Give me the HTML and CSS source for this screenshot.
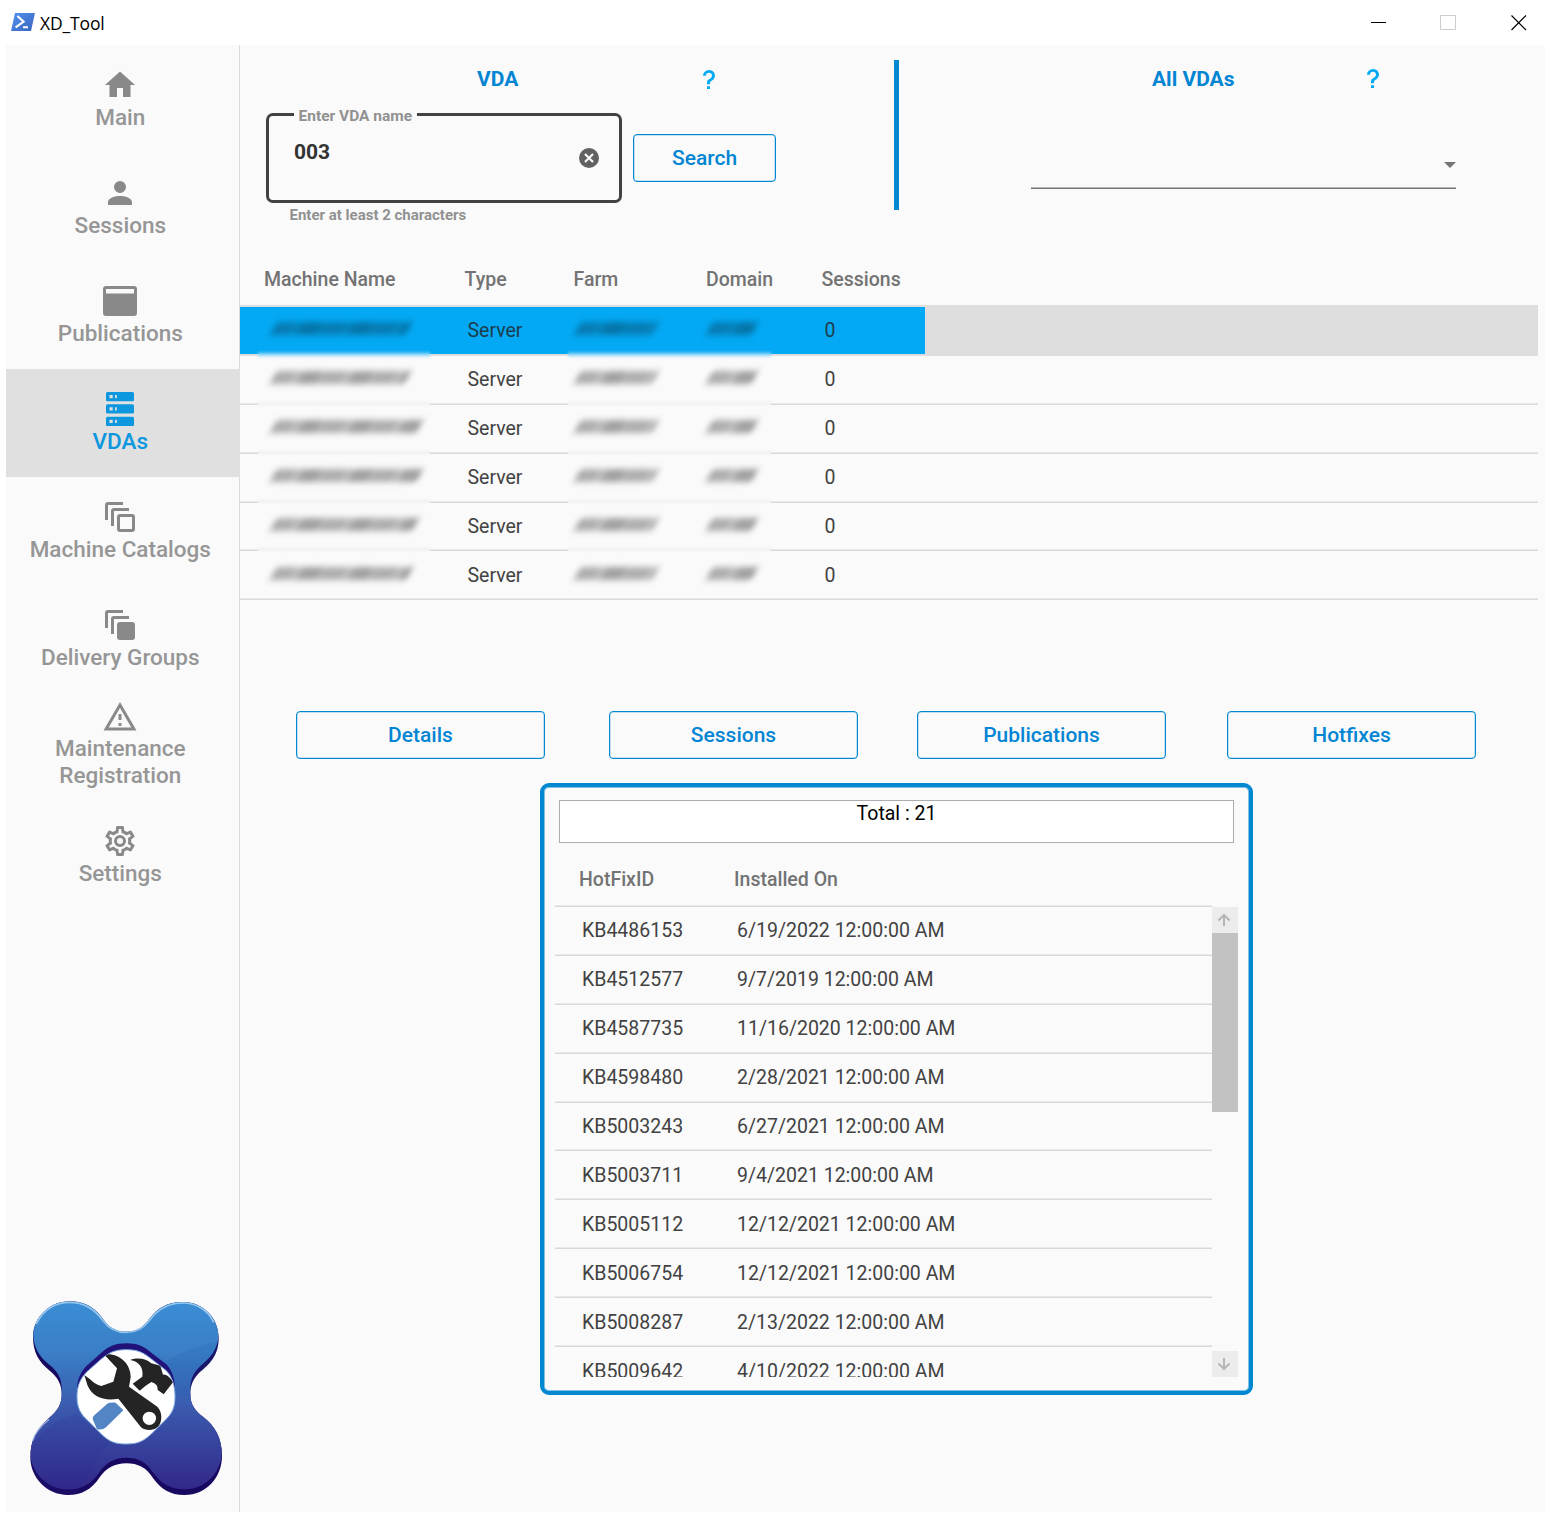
FILE: index.html
```html
<!DOCTYPE html>
<html lang="en">
<head>
<meta charset="utf-8">
<title>XD_Tool</title>
<link rel="stylesheet" href="styles.css">
</head>
<body>
<header class="titlebar">
  <svg class="app-icon" viewBox="0 0 24 18"><defs><linearGradient id="ps" x1="0" y1="0" x2="1" y2="1"><stop offset="0" stop-color="#5391f0"/><stop offset="1" stop-color="#3766bd"/></linearGradient></defs><path d="M4 0H24L20 18H0Z" fill="url(#ps)"/><path d="M6.4 3L12.6 8.6L4.6 14.4M12 14.2H17" fill="none" stroke="#fff" stroke-width="2.1"/></svg>
  <span class="app-title">XD_Tool</span>
  <div class="window-buttons">
    <svg viewBox="0 0 16 16"><path d="M0 7.5H15" stroke="#000"/></svg>
    <svg viewBox="0 0 16 16"><path d="M-.5 .5H14.5V14.5H-.5Z" fill="none" stroke="#ccc"/></svg>
    <svg viewBox="0 0 16 16"><path d="M.5 .5L15 15M15 .5L.5 15" stroke="#000" stroke-width="1.2"/></svg>
  </div>
</header>
<div class="window">
  <nav class="sidebar">
    <a class="nav-item"><svg viewBox="0 0 24 24"><path d="M10,20V14H14V20H19V12H22L12,3L2,12H5V20H10Z"/></svg><span>Main</span></a>
    <a class="nav-item"><svg viewBox="0 0 24 24"><path d="M12,4A4,4 0 0,1 16,8A4,4 0 0,1 12,12A4,4 0 0,1 8,8A4,4 0 0,1 12,4M12,14C16.42,14 20,15.79 20,18V20H4V18C4,15.79 7.58,14 12,14Z"/></svg><span>Sessions</span></a>
    <a class="nav-item"><svg viewBox="0 0 36 36"><path fill-rule="evenodd" d="M4 3H32Q35 3 35 6V30Q35 33 32 33H4Q1 33 1 30V6Q1 3 4 3ZM4 6V10.5H32V6Z"/></svg><span>Publications</span></a>
    <a class="nav-item selected"><svg viewBox="0 0 36 36"><path fill-rule="evenodd" d="M5.500 1H30.500Q32 1 32 2.500V9Q32 10.300 30.500 10.300H5.500Q4 10.300 4 9V2.500Q4 1 5.500 1ZM7.500 4V7.300H10.700V4ZM13 4V7.300H14.800V4ZM5.500 13.300H30.500Q32 13.300 32 14.800V21.300Q32 22.600 30.500 22.600H5.500Q4 22.600 4 21.300V14.800Q4 13.300 5.500 13.300ZM7.500 16.300V19.600H10.700V16.300ZM13 16.300V19.600H14.800V16.300ZM5.500 25.700H30.500Q32 25.700 32 27.200V33.700Q32 35 30.500 35H5.500Q4 35 4 33.700V27.200Q4 25.700 5.500 25.700ZM7.500 28.700V32H10.700V28.700ZM13 28.700V32H14.800V28.700Z"/></svg><span>VDAs</span></a>
    <a class="nav-item"><svg viewBox="0 0 36 36"><path class="line" d="M4.500 21V6Q4.500 4.500 6 4.500H21M10.500 27V12Q10.500 10.500 12 10.500H27"/><rect class="line" x="16.500" y="16.500" width="15" height="15" rx="1.500"/></svg><span>Machine Catalogs</span></a>
    <a class="nav-item"><svg viewBox="0 0 36 36"><path class="line" d="M4.500 21V6Q4.500 4.500 6 4.500H21M10.500 27V12Q10.500 10.500 12 10.500H27"/><rect x="15" y="15" width="18" height="18" rx="3"/></svg><span>Delivery Groups</span></a>
    <a class="nav-item two-line"><svg viewBox="0 0 24 24"><path d="M12,2L1,21H23M12,6L19.53,19H4.47M11,10V14H13V10M11,16V18H13V16"/></svg><span>Maintenance<br>Registration</span></a>
    <a class="nav-item"><svg viewBox="0 0 24 24"><path d="M12,8A4,4 0 0,1 16,12A4,4 0 0,1 12,16A4,4 0 0,1 8,12A4,4 0 0,1 12,8M12,10A2,2 0 0,0 10,12A2,2 0 0,0 12,14A2,2 0 0,0 14,12A2,2 0 0,0 12,10M10,22C9.75,22 9.54,21.82 9.5,21.58L9.13,18.93C8.5,18.68 7.96,18.34 7.44,17.94L4.95,18.95C4.73,19.03 4.46,18.95 4.34,18.73L2.34,15.27C2.21,15.05 2.27,14.78 2.46,14.63L4.57,12.97L4.5,12L4.57,11L2.46,9.37C2.27,9.22 2.21,8.95 2.34,8.73L4.34,5.27C4.46,5.05 4.73,4.96 4.95,5.05L7.44,6.05C7.96,5.66 8.5,5.32 9.13,5.07L9.5,2.42C9.54,2.18 9.75,2 10,2H14C14.25,2 14.46,2.18 14.5,2.42L14.87,5.07C15.5,5.32 16.04,5.66 16.56,6.05L19.05,5.05C19.27,4.96 19.54,5.05 19.66,5.27L21.66,8.73C21.79,8.95 21.73,9.22 21.54,9.37L19.43,11L19.5,12L19.43,13L21.54,14.63C21.73,14.78 21.79,15.05 21.66,15.27L19.66,18.73C19.54,18.95 19.27,19.04 19.05,18.95L16.56,17.95C16.04,18.34 15.5,18.68 14.87,18.93L14.5,21.58C14.46,21.82 14.25,22 14,22H10M11.25,4L10.88,6.61C9.68,6.86 8.62,7.5 7.85,8.39L5.44,7.35L4.69,8.65L6.8,10.2C6.4,11.37 6.4,12.64 6.8,13.8L4.68,15.36L5.43,16.66L7.86,15.62C8.63,16.5 9.68,17.14 10.87,17.38L11.24,20H12.76L13.13,17.39C14.32,17.14 15.37,16.5 16.14,15.62L18.57,16.66L19.32,15.36L17.2,13.81C17.6,12.64 17.6,11.37 17.2,10.2L19.31,8.65L18.56,7.35L16.15,8.39C15.38,7.5 14.32,6.86 13.12,6.62L12.75,4H11.25Z"/></svg><span>Settings</span></a>
    <svg class="logo" viewBox="55 55 590 595">
      <defs>
        <linearGradient id="face" x1="0" y1="0" x2="0" y2="1"><stop offset="0" stop-color="#3a8fd6"/><stop offset=".3" stop-color="#3a7ec6"/><stop offset=".6" stop-color="#3a57ac"/><stop offset="1" stop-color="#32288a"/></linearGradient>
        <path id="body" d="M70,170C70,110 120,62 180,62C225,62 258,82 282,118C300,142 320,153 350,153C385,153 402,138 418,116C445,80 475,64 520,64C580,64 627,112 627,172C627,225 600,250 570,275C550,295 542,315 542,340C542,370 555,390 580,408C615,435 637,470 637,525C637,590 590,643 525,643C480,643 455,625 432,595C410,560 385,548 350,548C315,548 290,562 270,590C245,628 215,643 175,643C110,643 62,590 62,530C62,480 80,445 118,412C145,390 156,370 156,340C156,312 145,290 120,270C88,245 70,215 70,170Z"/>
        <path id="hole" d="M350,207C385,207 400,215 425,235L470,270C488,290 496,315 496,348C496,385 485,400 465,420L425,460C400,482 385,490 350,490C315,490 300,482 280,465L235,420C212,400 202,380 202,348C202,315 212,295 230,275L275,235C300,215 315,207 350,207Z"/>
        <clipPath id="bodyClip"><use href="#body"/></clipPath>
        <clipPath id="holeClip"><use href="#hole"/></clipPath>
      </defs>
      <use href="#body" fill="#19085f"/>
      <g clip-path="url(#bodyClip)">
        <use href="#body" y="-17" fill="url(#face)"/>
        <path d="M380,330Q450,215 640,180V420Q600,330 380,330Z" fill="#1e5fae" opacity=".16"/>
        <path d="M60,510Q110,420 200,400L300,480L200,640H50Z" fill="#2b2b8c" opacity=".14"/>
      </g>
      <path d="M80,130C100,85 140,65 180,65C225,65 255,85 280,120C298,144 320,155 350,155C385,155 404,140 420,118C447,82 477,67 520,67C560,67 595,88 612,125" fill="none" stroke="#b6dcf5" stroke-width="5" opacity=".75"/>
      <path d="M69,480Q78,447 118,416" fill="none" stroke="#b6c8ef" stroke-width="5" opacity=".7"/>
      <use href="#hole" y="-19" fill="#21127a"/>
      <use href="#hole" fill="#fff" stroke="#83aee0" stroke-width="3"/>
      <g clip-path="url(#holeClip)">
        <path d="M284,222C325,215 364,248 363,290L358,318L443,378C461,397 457,428 443,440C430,451 406,450 394,440L326,354C285,362 248,350 233,313L224,283L243,297Q255,310 275,316L311,303L322,263Z" fill="#242424"/>
        <circle cx="419" cy="413" r="20" fill="#fff"/>
        <path d="M361,238C385,229 410,234 425,248L452,255L460,282Q475,280 490,305L462,341L444,328Q446,310 425,304L408,315L390,330L369,309L398,288C402,262 390,243 361,238Z" fill="#242424"/>
        <path d="M251,420Q246,412 254,404L292,370Q298,365 318,366L341,389L289,440Q280,449 262,446Z" fill="#5384c4"/>
      </g>
    </svg>
  </nav>
  <main class="content">
    <section class="search-bar">
      <div class="vda-pane">
        <div class="pane-title"><h2>VDA</h2><svg class="help" viewBox="6 2 12 20" preserveAspectRatio="none"><path d="M10,19H13V22H10V19M12,2C17.35,2.22 19.68,7.62 16.5,11.67C15.67,12.67 14.33,13.33 13.67,14.17C13,15 13,16 13,17H10C10,15.33 10,13.92 10.67,12.92C11.33,11.92 12.67,11.33 13.5,10.67C15.92,8.43 15.32,5.26 12,5A3,3 0 0,0 9,8H6A6,6 0 0,1 12,2Z"/></svg></div>
        <div class="search-form">
          <div class="field"><span class="field-label">Enter VDA name</span><span class="field-value">003</span>
            <svg class="clear" viewBox="0 0 20 20"><circle cx="10" cy="10" r="10" fill="#616161"/><path d="M6 6L14 14M14 6L6 14" stroke="#fafafa" stroke-width="2.2"/></svg></div>
          <button class="btn search">Search</button>
        </div>
        <p class="hint">Enter at least 2 characters</p>
      </div>
      <div class="divider"></div>
      <div class="all-pane">
        <div class="pane-title"><h2>All VDAs</h2><svg class="help" viewBox="6 2 12 20" preserveAspectRatio="none"><path d="M10,19H13V22H10V19M12,2C17.35,2.22 19.68,7.62 16.5,11.67C15.67,12.67 14.33,13.33 13.67,14.17C13,15 13,16 13,17H10C10,15.33 10,13.92 10.67,12.92C11.33,11.92 12.67,11.33 13.5,10.67C15.92,8.43 15.32,5.26 12,5A3,3 0 0,0 9,8H6A6,6 0 0,1 12,2Z"/></svg></div>
        <div class="dropdown"><i class="caret"></i></div>
      </div>
    </section>
    <section class="machines">
      <div class="m-head m-grid"><span>Machine Name</span><span>Type</span><span>Farm</span><span>Domain</span><span>Sessions</span></div>
      <div class="m-row m-grid selected"><span><i class="smudge" style="width:136px"></i></span><span>Server</span><span><i class="smudge" style="width:79px"></i></span><span><i class="smudge" style="width:46px"></i></span><span>0</span></div>
      <div class="m-row m-grid"><span><i class="smudge" style="width:135px"></i></span><span>Server</span><span><i class="smudge" style="width:79px"></i></span><span><i class="smudge" style="width:46px"></i></span><span>0</span></div>
      <div class="m-row m-grid"><span><i class="smudge" style="width:147px"></i></span><span>Server</span><span><i class="smudge" style="width:79px"></i></span><span><i class="smudge" style="width:46px"></i></span><span>0</span></div>
      <div class="m-row m-grid"><span><i class="smudge" style="width:147px"></i></span><span>Server</span><span><i class="smudge" style="width:79px"></i></span><span><i class="smudge" style="width:46px"></i></span><span>0</span></div>
      <div class="m-row m-grid"><span><i class="smudge" style="width:143px"></i></span><span>Server</span><span><i class="smudge" style="width:79px"></i></span><span><i class="smudge" style="width:46px"></i></span><span>0</span></div>
      <div class="m-row m-grid last"><span><i class="smudge" style="width:137px"></i></span><span>Server</span><span><i class="smudge" style="width:79px"></i></span><span><i class="smudge" style="width:46px"></i></span><span>0</span></div>
    </section>
    <section class="actions">
      <button class="btn">Details</button><button class="btn">Sessions</button><button class="btn">Publications</button><button class="btn">Hotfixes</button>
    </section>
    <section class="panel">
      <div class="total">Total : 21</div>
      <div class="h-head h-grid"><span>HotFixID</span><span>Installed On</span></div>
      <div class="list">
        <div class="rows">
          <div class="h-row h-grid"><span>KB4486153</span><span>6/19/2022 12:00:00 AM</span></div>
          <div class="h-row h-grid"><span>KB4512577</span><span>9/7/2019 12:00:00 AM</span></div>
          <div class="h-row h-grid"><span>KB4587735</span><span>11/16/2020 12:00:00 AM</span></div>
          <div class="h-row h-grid"><span>KB4598480</span><span>2/28/2021 12:00:00 AM</span></div>
          <div class="h-row h-grid"><span>KB5003243</span><span>6/27/2021 12:00:00 AM</span></div>
          <div class="h-row h-grid"><span>KB5003711</span><span>9/4/2021 12:00:00 AM</span></div>
          <div class="h-row h-grid"><span>KB5005112</span><span>12/12/2021 12:00:00 AM</span></div>
          <div class="h-row h-grid"><span>KB5006754</span><span>12/12/2021 12:00:00 AM</span></div>
          <div class="h-row h-grid"><span>KB5008287</span><span>2/13/2022 12:00:00 AM</span></div>
          <div class="h-row h-grid cut"><span>KB5009642</span><span>4/10/2022 12:00:00 AM</span></div>
        </div>
        <div class="scrollbar">
          <svg viewBox="0 0 26 26"><path d="M12 19V8M6.500 13.500L12 8L17.500 13.500"/></svg>
          <div class="thumb"></div>
          <svg viewBox="0 0 26 26"><path d="M12 7V18M6.500 12.500L12 18L17.500 12.500"/></svg>
        </div>
      </div>
    </section>
  </main>
</div>
</body>
</html>
```
FILE: styles.css
```css
* { box-sizing: border-box; }
body { margin: 0; width: 1551px; height: 1518px; background: #fff; font-family: Roboto, "Liberation Sans", sans-serif; color: #424242; overflow: hidden; }
h2, p { margin: 0; }
svg { display: block; }

.titlebar { height: 45px; padding: 0 24px 0 11px; display: flex; align-items: center; }
.app-icon { width: 24px; height: 18px; margin-top: -1px; }
.app-title { margin-left: 5px; font: 17.5px/24px "Open Sans", sans-serif; letter-spacing: -.15px; color: #000; }
.window-buttons { margin-left: auto; display: flex; gap: 54px; }
.window-buttons svg { width: 16px; height: 16px; overflow: visible; }

.window { margin: 0 6px; height: 1467px; display: flex; background: #fafafa; }

.sidebar { width: 234px; border-right: 1px solid #dadada; display: flex; flex-direction: column; }
.nav-item { height: 108px; padding: 0 6px 0 0; margin-right: -1px; display: flex; flex-direction: column; align-items: center; justify-content: center; color: #969696; font-size: 22.5px; font-weight: 500; line-height: 27px; text-align: center; }
.nav-item svg { width: 36px; height: 36px; margin: -1px 0 1px; fill: #898989; }
.nav-item span { position: relative; left: .3px; }
.nav-item .line { fill: none; stroke: #898989; stroke-width: 3; }
.nav-item.two-line { padding-bottom: 6px; }
.nav-item.two-line svg { margin: 0; }
.nav-item.selected { background: #e0e0e0; color: #0c97de; }
.nav-item.selected svg { fill: #0c97de; }
.logo { width: 196.7px; height: 198.3px; margin: auto 0 14.7px 22.3px; }

.content { flex: 1; display: flex; flex-direction: column; }
.pane-title { display: flex; align-items: center; height: 24px; }
.pane-title h2 { font-size: 21px; line-height: 24px; font-weight: 700; color: #0285d3; }
.help { width: 12px; height: 19px; fill: #03a9f4; }

.search-bar { display: flex; height: 190px; padding-top: 15px; }
.vda-pane { width: 654px; padding: 7px 0 0 26px; }
.vda-pane .pane-title { padding-left: 211px; gap: 185px; }
.vda-pane .help { margin-top: 1px; }
.search-form { display: flex; align-items: flex-start; gap: 11px; margin-top: 22px; }
.field { position: relative; width: 356px; height: 90px; border: 3px solid #424242; border-radius: 7px; padding: 24px 0 0 25px; }
.field-label { position: absolute; left: 25px; top: -10px; padding: 0 4.5px; background: #fafafa; font-size: 15.5px; line-height: 20px; font-weight: 700; color: #919191; }
.field-value { font-size: 21px; line-height: 24px; font-weight: 700; color: #333; display: block; }
.clear { position: absolute; right: 20px; top: 32px; width: 20px; height: 20px; }
.btn { height: 48px; width: 249px; border: 1.5px solid #0288d1; border-radius: 4px; background: transparent; font: 500 21px/24px Roboto, sans-serif; color: #0285d3; padding: 0; box-shadow: inset 0 0 0 .5px #8bc7ea; }
.btn.search { width: 143px; margin-top: 21px; }
.hint { margin: 2px 0 0 23.5px; font-size: 15px; line-height: 20px; font-weight: 700; color: #919191; }
.divider { width: 5px; height: 150px; background: #0288d1; }
.all-pane { padding: 7px 0 0 132px; }
.all-pane .pane-title { padding-left: 121px; gap: 132.500px; }
.all-pane .help { margin-top: -1px; }
.dropdown { width: 425px; height: 90px; margin-top: 8px; border-bottom: 1px solid #757575; box-shadow: inset 0 -1px #b5b5b5; display: flex; justify-content: flex-end; padding-top: 63px; }
.caret { width: 12px; height: 6px; background: #757575; clip-path: polygon(0 0, 100% 0, 50% 100%); }

.machines { width: 1298px; height: 365px; padding-top: 20px; }
.m-grid { display: grid; grid-template-columns: 200.5px 109px 132.5px 115.5px 200px; padding-left: 24px; font-size: 19.5px; line-height: 24px; }
.m-head { height: 52px; padding-top: 13px; font-weight: 500; color: #737373; border-bottom: 2px solid #dedede; }
.m-row { position: relative; height: 48.9px; padding: 12.2px 0 0 27px; border-bottom: 1px solid #d8d8d8; box-shadow: inset 0 -1px #e9e9e9; }
.m-row.selected { background: linear-gradient(#03a9f4, #03a9f4) 0 0 / 685px 47px no-repeat #dedede; color: #1d3d4d; border-bottom-color: #dedede; box-shadow: none; }
.m-row::before, .m-row::after { content: ""; position: absolute; bottom: -3px; height: 7px; background: linear-gradient(#fafafa, #f2f2f2, #fafafa); z-index: 1; }
.m-row::before { left: 18px; width: 172px; }
.m-row::after { left: 328px; width: 203px; }
.m-row.selected::before, .m-row.selected::after { background: linear-gradient(#03a9f4, #a9def8 60%, #fafafa); filter: blur(.8px); }
.m-row.last::before, .m-row.last::after { display: none; }
.smudge { display: block; height: 13px; margin: 3px 0 0 6px; transform: skewX(-25deg); filter: blur(3.4px); background: repeating-linear-gradient(90deg, #adadad 0 17px, #bdbdbd 21px 24px, #a0a0a0 30px 44px, #b4b4b4 48px 51px); }
.m-row > :nth-child(3) .smudge, .m-row > :nth-child(4) .smudge { margin-left: 0; }
.selected .smudge { background: repeating-linear-gradient(90deg, #067bb3 0 17px, #0684bd 21px 24px, #0574a8 30px 44px, #0680b8 48px 51px); }

.actions { display: flex; padding: 111px 0 0 56px; }
.actions .btn:nth-child(2) { margin-left: 64px; }
.actions .btn:nth-child(3) { margin-left: 59px; }
.actions .btn:nth-child(4) { margin-left: 61px; }

.panel { width: 713px; height: 612px; margin: 24px 0 0 300px; border: 4px solid #0288d1; box-shadow: inset 0 0 0 1px #7fc0e6; border-radius: 9px; padding: 13px 11px 0; }
.total { height: 43px; margin: 0 4px; padding-top: 1px; border: 1px solid #abadb3; background: #fff; text-align: center; font-size: 19.5px; line-height: 24px; color: #000; }
.h-grid { display: grid; grid-template-columns: 155px 1fr; font-size: 19.5px; line-height: 24px; }
.h-head { height: 64px; width: 657px; padding: 25px 0 0 24px; font-weight: 500; color: #737373; border-bottom: 1px solid #d8d8d8; box-shadow: inset 0 -1px #e9e9e9; }
.list { display: flex; height: 470px; overflow: hidden; }
.rows { width: 657px; overflow: hidden; }
.h-row { height: 48.9px; padding: 12.45px 0 0 27px; border-bottom: 1px solid #d8d8d8; box-shadow: inset 0 -1px #e9e9e9; }
.h-row.cut { padding-top: 13px; }
.scrollbar { width: 26px; display: flex; flex-direction: column; }
.scrollbar svg { width: 26px; height: 26px; background: #ececec; fill: none; stroke: #b5b5b5; stroke-width: 2; }
.scrollbar svg:last-child { margin-top: auto; }
.thumb { height: 179px; background: #c2c2c2; }
```
